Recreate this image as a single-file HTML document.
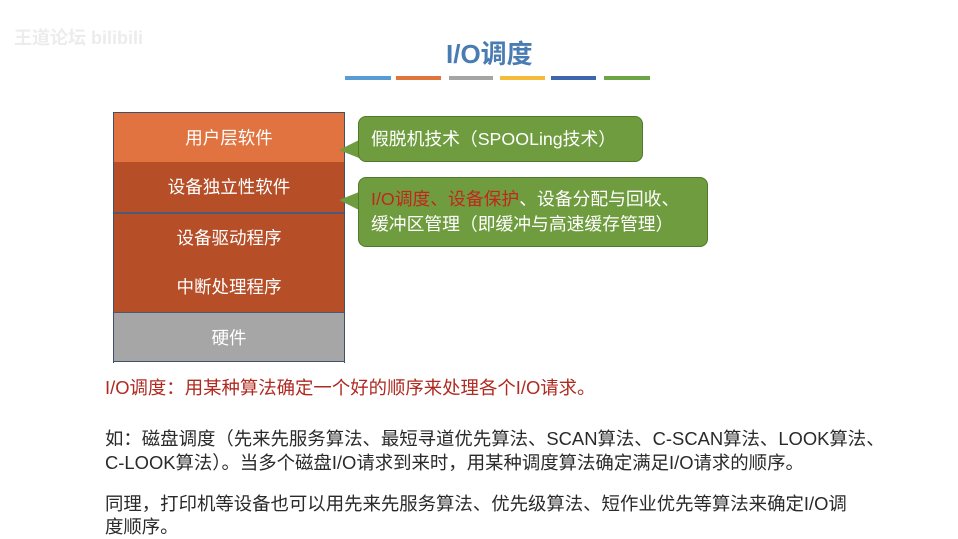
<!DOCTYPE html>
<html><head><meta charset="utf-8"><style>
body{margin:0;width:958px;height:539px;background:#fff;position:relative;overflow:hidden;font-family:"Liberation Sans","Noto Sans CJK SC",sans-serif;}
.a{position:absolute;}
.row{position:absolute;left:113px;width:232px;height:50px;color:#fff;font-size:17.5px;text-align:center;line-height:50px;box-sizing:border-box;}
.bar{position:absolute;top:76px;height:4px;}
.bub{position:absolute;background:#6f9c3e;border:1px solid #4f7a2a;border-radius:8px;color:#fff;font-size:17.8px;box-sizing:border-box;white-space:nowrap;}
.t{position:absolute;left:105px;font-size:18.4px;color:#2a2a2a;white-space:nowrap;}
</style></head><body>
<div class="a" style="left:14px;top:24px;font-size:18px;color:#ececec;font-weight:bold">王道论坛 bilibili</div>
<div class="a" style="left:446px;top:34px;font-size:26px;font-weight:bold;color:#4a7cb4">I/O调度</div>
<div class="bar" style="left:345px;width:46px;background:#5b9bd5"></div>
<div class="bar" style="left:396px;width:45px;background:#e0743d"></div>
<div class="bar" style="left:449px;width:44px;background:#a5a5a5"></div>
<div class="bar" style="left:500px;width:45px;background:#f5bb3a"></div>
<div class="bar" style="left:551px;width:45px;background:#3e66ae"></div>
<div class="bar" style="left:604px;width:46px;background:#6ca547"></div>

<div class="row" style="top:112px;background:#e07340;border-top:1px solid #41506a">用户层软件</div>
<div class="row" style="top:162px;background:#b64e28">设备独立性软件</div>
<div class="row" style="top:212px;background:#b64e28;border-top:2px solid #4a5a78;line-height:48px">设备驱动程序</div>
<div class="row" style="top:262px;background:#b64e28">中断处理程序</div>
<div class="row" style="top:312px;background:#a6a6a6;border-top:1px solid #4a5a78;border-bottom:1px solid #41506a">硬件</div>
<div class="a" style="left:113px;top:112px;width:232px;height:251px;border-left:1px solid #41506a;border-right:1px solid #41506a;box-sizing:border-box"></div>

<svg class="a" style="left:335px;top:140px" width="30" height="80"><polygon points="24,0 4,10 24,18" fill="#6f9c3e"/><polygon points="24,52 4,60 24,70" fill="#6f9c3e"/></svg>
<div class="bub" style="left:358px;top:116px;width:285px;height:46px;line-height:44px;padding-left:12px">假脱机技术（SPOOLing技术）</div>
<div class="bub" style="left:358px;top:177px;width:350px;height:70px;padding:9px 0 0 12px;line-height:25px"><span style="color:#c0281e">I/O调度、设备保护</span>、设备分配与回收、<br>缓冲区管理（即缓冲与高速缓存管理）</div>

<div class="t" style="top:374px;color:#b02a22">I/O调度：用某种算法确定一个好的顺序来处理各个I/O请求。</div>
<div class="t" style="top:425px">如：磁盘调度（先来先服务算法、最短寻道优先算法、SCAN算法、C-SCAN算法、LOOK算法、</div>
<div class="t" style="top:449px">C-LOOK算法）。当多个磁盘I/O请求到来时，用某种调度算法确定满足I/O请求的顺序。</div>
<div class="t" style="top:490px">同理，打印机等设备也可以用先来先服务算法、优先级算法、短作业优先等算法来确定I/O调</div>
<div class="t" style="top:513px">度顺序。</div>
</body></html>
